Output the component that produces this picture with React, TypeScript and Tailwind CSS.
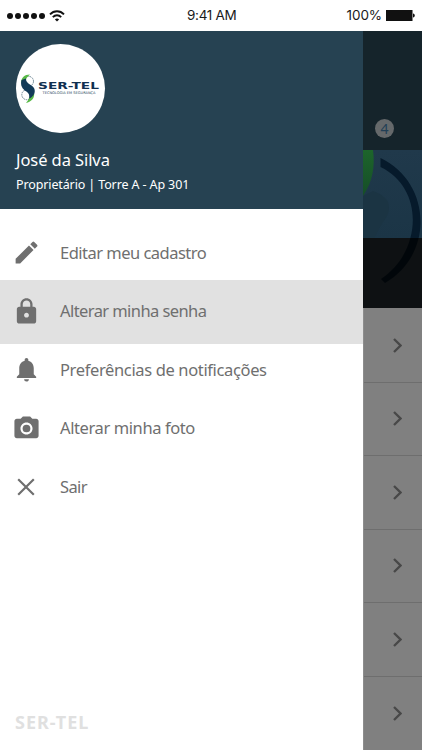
import { MdCameraAlt, MdEdit, MdLock, MdNotifications } from 'react-icons/md';
import type { ReactNode } from 'react';

type MenuItem = {
  label: string;
  icon: ReactNode;
  spacing: string;
  active?: boolean;
};

const menuItems: MenuItem[] = [
  {
    label: 'Editar meu cadastro',
    icon: <MdEdit className="w-[29px] h-[29px]" />,
    spacing: 'tracking-[-0.52px]',
  },
  {
    label: 'Alterar minha senha',
    icon: <MdLock className="w-[29px] h-[29px]" />,
    spacing: 'tracking-[-0.58px]',
    active: true,
  },
  {
    label: 'Preferências de notificações',
    icon: <MdNotifications className="w-[29px] h-[29px]" />,
    spacing: 'tracking-[-0.36px]',
  },
  {
    label: 'Alterar minha foto',
    icon: <MdCameraAlt className="w-[29px] h-[29px]" />,
    spacing: 'tracking-[-0.4px]',
  },
  {
    label: 'Sair',
    icon: (
      <svg viewBox="0 0 18 18" className="w-[18px] h-[18px]" fill="none" stroke="currentColor" strokeWidth="2.2">
        <path d="M1.2 1.2 16.8 16.8M16.8 1.2 1.2 16.8" />
      </svg>
    ),
    spacing: 'tracking-[-0.6px]',
  },
];

function StatusBar() {
  return (
    <div className="relative h-[31px] flex items-center justify-between pl-[7px] pr-[7px] bg-white text-[#1a1a1a] font-['Inter',sans-serif] text-[13.5px]">
      <div className="flex items-center gap-[4px]">
        <div className="flex gap-[2px]">
          {[0, 1, 2, 3, 4].map((dot) => (
            <span key={dot} className="w-[6px] h-[6px] rounded-full bg-[#111]" />
          ))}
        </div>
        <svg viewBox="0 0 16 12" className="w-[16px] h-[12px]" fill="none" stroke="#111" strokeWidth="1.9">
          <path d="M1 4.3C5 .2 11 .2 15 4.3M3.8 7.1c2.4-2.4 6-2.4 8.4 0" />
          <path d="M8 11.6 5.9 9.4c1.2-1.1 3-1.1 4.2 0z" fill="#111" stroke="none" />
        </svg>
      </div>
      <span className="absolute left-[187px] tracking-[-0.3px]">9:41 AM</span>
      <div className="flex items-center gap-[4px]">
        <span className="tracking-[-0.1px]">100%</span>
        <svg viewBox="0 0 29 11" className="w-[29px] h-[11px]" fill="#111">
          <path d="M0 0h26.5v11H0zM27 3.5c2.4.2 2.4 3.8 0 4z" />
        </svg>
      </div>
    </div>
  );
}

function Logo() {
  return (
    <div className="w-[89px] h-[89px] rounded-full bg-white flex items-center justify-center">
      <svg viewBox="0 0 89 89" className="w-[89px] h-[89px]">
        <circle cx="12.5" cy="37.3" r="5" fill="none" stroke="#5a7686" strokeWidth="0.9" strokeDasharray="1.6 0.8" />
        <circle cx="10.8" cy="50.7" r="5" fill="none" stroke="#5a7686" strokeWidth="0.9" strokeDasharray="1.6 0.8" />
        {/* upper and lower leaves */}
        <path d="M14 30.5C8.500 30.5 5 34 5.300 38.500L9.500 42c-1-4.500.5-8.500 4.500-11.500z" fill="#58b947" />
        <path d="M10 59c5-1 8.500-4.500 8.200-9.500L14 45.500c1 5-.5 9.500-4 13.500z" fill="#58b947" />
        <path
          d="M5.500 36C4 41.500 6.500 45 10 47.300c3 2 3.600 3.700 3.200 7.200 4.800-2 6.800-6.500 4.800-10.500C16.300 41 11.500 40.300 10.200 36.500L10 34.500z"
          fill="#123a58"
        />
        <text
          x="22"
          y="45"
          fill="#102f50"
          className="font-['DejaVu_Sans',sans-serif] text-[8px] font-bold"
          textLength="61"
          lengthAdjust="spacingAndGlyphs"
        >
          SER-TEL
        </text>
        <text
          x="26.5"
          y="50.3"
          fill="#28435a"
          className="font-['DejaVu_Sans',sans-serif] text-[3.6px]"
          textLength="53"
          lengthAdjust="spacingAndGlyphs"
        >
          TECNOLOGIA EM SEGURANÇA
        </text>
      </svg>
    </div>
  );
}

function Drawer() {
  return (
    <aside className="w-[363px] flex flex-col bg-white font-['Noto_Sans',sans-serif]">
      <div className="h-[178px] bg-[#264252] pt-[13px] pl-4 text-white">
        <Logo />
        <h1 className="mt-[15px] text-[16.5px] leading-[24px] tracking-[-0.08px] whitespace-nowrap">José da Silva</h1>
        <p className="mt-[3px] text-[12.5px] leading-[20px] tracking-[-0.12px] whitespace-nowrap">
          Proprietário | Torre A - Ap 301
        </p>
      </div>

      <nav className="pt-[12px]">
        {menuItems.map((item) => (
          <div
            key={item.label}
            className={`flex items-center h-[64.5px] mb-[-6px] text-[#6f6f6f] ${item.active ? 'bg-[#e1e1e1]' : ''}`}
          >
            <div className="w-[52px] mr-[8px] pb-px flex justify-center">{item.icon}</div>
            <span className={`text-[16.5px] leading-6 pb-px whitespace-nowrap ${item.spacing}`}>{item.label}</span>
          </div>
        ))}
      </nav>

      <footer className="mt-auto pl-[15px] pb-[16px] text-[18px] leading-6 tracking-[1px] font-bold text-[#e0e0e0]">
        SER-TEL
      </footer>
    </aside>
  );
}

// Page behind the drawer, already dimmed
function PageBehind() {
  return (
    <main className="flex-1 flex flex-col bg-[#808080]">
      <div className="h-[120px] bg-[#15242b] pt-[88px] pl-[12px]">
        <div className="w-[19px] h-[19px] rounded-full bg-[#65696b] text-[#213f56] text-[14px] leading-[19px] text-center font-['Noto_Sans',sans-serif]">
          4
        </div>
      </div>
      <svg viewBox="0 0 59 158" className="w-[59px] h-[158px] shrink-0">
        <defs>
          <linearGradient id="sky" x1="0" y1="0" x2="0" y2="1">
            <stop offset="0" stopColor="#20394b" />
            <stop offset="1" stopColor="#1b3546" />
          </linearGradient>
          <linearGradient id="leaf" x1="0" y1="0" x2="0" y2="1">
            <stop offset="0" stopColor="#1d652b" />
            <stop offset="1" stopColor="#164e28" />
          </linearGradient>
        </defs>
        <rect width="59" height="88" fill="url(#sky)" />
        <path d="M0 46 10 41C20 45 26 49 26 58c0 7-5 12-9 19l-6 11H0z" fill="#1b3443" />
        <path d="M0 0h10c2 16 0 31-10 46z" fill="url(#leaf)" />
        <path d="M17.5 8C67 31 73 103 22 133l-4-4C58 103 63 39 17.500 17z" fill="#061a2b" />
        <rect y="88" width="59" height="70" fill="#010407" fillOpacity="0.9" />
      </svg>
      <div className="flex-1 border-l border-[#8d8d8d] pt-px">
        {[0, 1, 2, 3, 4, 5].map((row) => (
          <div
            key={row}
            className="h-[73.5px] border-b border-[#6e6e6e] flex items-center pl-[29px] last:border-b-0"
          >
            <svg viewBox="0 0 9 15" className="w-[9px] h-[15px]" fill="none" stroke="#484848" strokeWidth="2.3">
              <path d="m1 1 6.5 6.5L1 14" />
            </svg>
          </div>
        ))}
      </div>
    </main>
  );
}

export default function App() {
  return (
    <div className="w-[422px] h-[750px] flex flex-col overflow-hidden bg-white">
      <StatusBar />
      <div className="flex flex-1 min-h-0">
        <Drawer />
        <PageBehind />
      </div>
    </div>
  );
}
